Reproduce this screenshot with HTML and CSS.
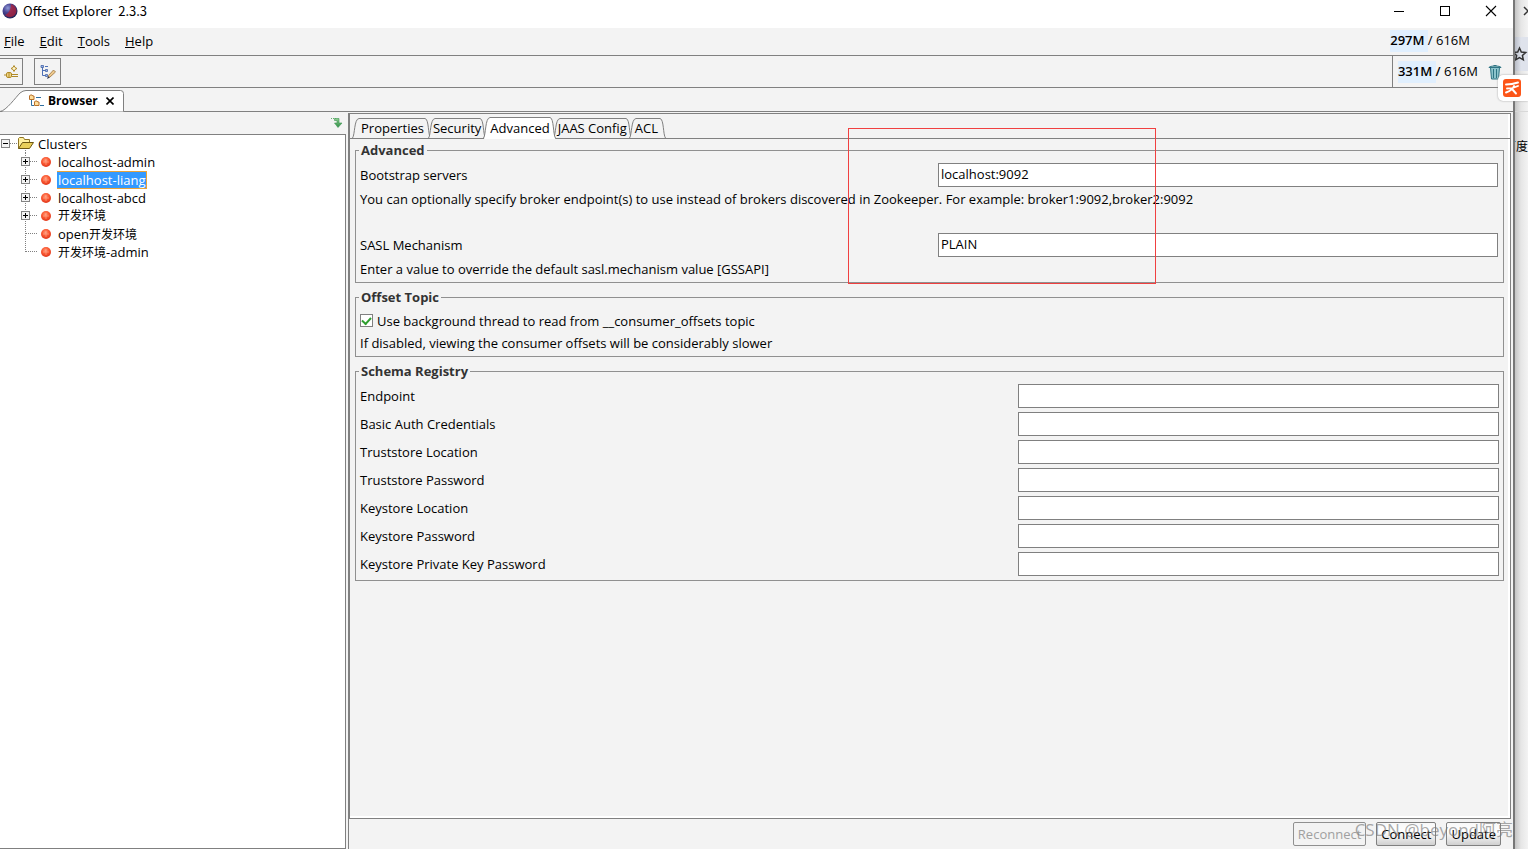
FILE: index.html
```
<!DOCTYPE html>
<html lang="zh-CN">
<head>
<meta charset="utf-8">
<title>Offset Explorer</title>
<link rel="stylesheet" href="styles.css">
</head>
<body>
<svg class="defs" aria-hidden="true">
  <defs>
    <radialGradient id="ball" cx="45%" cy="35%" r="65%"><stop offset="0" stop-color="#ff9a78"/><stop offset=".5" stop-color="#fb5a34"/><stop offset="1" stop-color="#e0371a"/></radialGradient>
    <radialGradient id="logo" cx="35%" cy="30%" r="75%"><stop offset="0" stop-color="#8f9ad8"/><stop offset=".4" stop-color="#4a4694"/><stop offset="1" stop-color="#1c2050"/></radialGradient>
    <linearGradient id="arrow" x1="0" y1="0" x2="0" y2="1"><stop offset="0" stop-color="#8fd08f"/><stop offset="1" stop-color="#2c8a45"/></linearGradient>
    <g id="dot"><circle cx="46" cy="9" r="5" fill="url(#ball)"/><path d="M43 9h6M46 6v6" stroke="#ffb49c" stroke-width="1" opacity=".5"/></g>
    <g id="plus" shape-rendering="crispEdges"><rect x="21.500" y="4.500" width="8" height="8" fill="#f4f4f4" stroke="#848484"/><path d="M23 8.500h5M25.500 6v5" stroke="#000"/></g>
    <g id="branch" fill="none" stroke="#808080" stroke-dasharray="1 1" shape-rendering="crispEdges"><path d="M25.500 0v18M26 8.500h11"/></g>
    <g id="edge-l"><path d="M1 20C3 17 2 1 7 0.500V20z" fill="#f4f4f4"/><path d="M.5 20C3 17 2 1 7 .5" fill="none" stroke="#808080"/></g>
    <g id="edge-r"><path d="M0 .5C4 1 3 17 5.500 20H0z" fill="#f4f4f4"/><path d="M0 .5C4 1 3 17 5.500 20" fill="none" stroke="#808080"/></g>
  </defs>
</svg>
<div class="desktop">
  <main class="window">
    <header class="titlebar">
      <svg class="logo" width="16" height="16" viewBox="0 0 16 16"><circle cx="8" cy="8" r="7.500" fill="url(#logo)"/><path d="M9 1a7 7 0 0 1 5 9c-2 5-8 5-11 2 3-1 6-5 6-11z" fill="#b02038" opacity=".75"/></svg>
      <h1>Offset Explorer&nbsp; 2.3.3</h1>
      <div class="controls">
        <button aria-label="Minimize"><svg width="12" height="12"><path d="M1 6.500h10" stroke="#000"/></svg></button>
        <button aria-label="Maximize"><svg width="12" height="12"><rect x="1.500" y="1.500" width="9" height="9" fill="none" stroke="#000"/></svg></button>
        <button aria-label="Close"><svg width="12" height="12"><path d="M1 1l10 10M11 1L1 11" stroke="#000" stroke-width="1.100"/></svg></button>
      </div>
    </header>
    <div class="menubar">
      <nav><a href="#"><u>F</u>ile</a><a href="#"><u>E</u>dit</a><a href="#"><u>T</u>ools</a><a href="#"><u>H</u>elp</a></nav>
      <div class="memory"><b>297M</b> / 616M</div>
    </div>
    <div class="toolbar">
      <button class="tool first" aria-label="Add connection"><svg width="16" height="16" viewBox="0 0 16 16" fill="#f3d98a" stroke="#b08a28"><path d="M1 11h3M9 10.500h6M9 12.500h6"/><rect x="3.500" y="8.500" width="5" height="5" rx="1.500"/><path d="M6 8v6"/><path d="M11 1.500l1 2 2 1-2 1-1 2-1-2-2-1 2-1z" fill="#fff6d0"/></svg></button>
      <button class="tool" aria-label="Edit tree"><svg width="16" height="16" viewBox="0 0 16 16"><path d="M2.500 3v8.500h3M2.500 6.500h3M5 2.500h3" fill="none" stroke="#4c6fb5"/><path d="M1 1.500h2.500v2H1zM5.500 5.500h2v2h-2zM5.500 10.500h2v2h-2z" fill="#9db6e6" stroke="#4464a8" stroke-width=".8"/><path d="M8 13.500l.5-2L13.500 6l2 2-5.500 5z" fill="#efca8e" stroke="#9a7440" stroke-width=".8"/><path d="M7 15l1.200-2.800 1.600 1.300z" fill="#28334f"/></svg></button>
      <div class="heap"><div class="memory"><b>331M /</b> 616M</div>
        <button class="trash" aria-label="Collect garbage"><svg width="14" height="16" viewBox="0 0 14 16"><path d="M2.500 3.500h9l-1 11.500h-7z" fill="#8cc4cc" stroke="#2f7484"/><path d="M1 3.500C1 1.500 13 1.500 13 3.500z" fill="#b5dadb" stroke="#2f7484"/><path d="M5.500 5v9M8.500 5v9" stroke="#2f7484"/><path d="M5.500 1.500h3" stroke="#2f7484"/></svg></button></div>
    </div>
    <div class="viewtabs">
      <div class="viewtab">
        <svg class="viewshape" width="124" height="24" viewBox="0 0 124 24"><path d="M2 23.500C6 22 16 9 20 5q3-2.500 6-2.500h94.500q3 0 3 3v18z" fill="#fff"/><path d="M0 23.500C6 23 16 9 20 5q3-2.500 6-2.500h94.500q3 0 3 3v18" fill="none" stroke="#808080"/></svg>
        <svg class="viewicon" width="16" height="16" viewBox="0 0 16 16"><path d="M3.500 6v6.500H6M8 4.500h5M12 12.500h4" fill="none" stroke="#2f6f9f"/><path d="M1.500 3l.8-1h1.700l.8 1h1.200v3.500H1.500zM6.500 9l.8-1h1.700l.8 1h1.200v3.500H6.500z" fill="#ffdf9c" stroke="#b8702a" stroke-width="1"/></svg>
        <span>Browser</span>
        <button aria-label="Close Browser"><svg width="8" height="8"><path d="M.5.5l7 7M7.500.5l-7 7" stroke="#000" stroke-width="1.600"/></svg></button>
      </div>
    </div>
    <div class="panes">
      <aside class="side">
        <div class="sidebar-tools"><button aria-label="Link selection"><svg width="12" height="12" viewBox="0 0 12 12"><path d="M0 1.500h5" stroke="#64b070" stroke-dasharray="1 1"/><path d="M3.500 1.500H8V6h3L7 10.500 3.500 6H6V3.500H3.500z" fill="url(#arrow)" stroke="#3c9552" stroke-width=".6"/></svg></button></div>
        <ul class="tree">
          <li><svg width="38" height="18"><path d="M10 8.500h8M25.500 15v3" stroke="#808080" stroke-dasharray="1 1" shape-rendering="crispEdges"/><g shape-rendering="crispEdges"><rect x="1.500" y="4.500" width="8" height="8" fill="#f4f4f4" stroke="#848484"/><path d="M3 8.500h5" stroke="#000"/></g><path d="M18.500 13.500v-10l1-1h4l1 2h5v3" fill="#fff0a0" stroke="#8f7423"/><path d="M18.500 13.500l4-6h11l-4 6z" fill="#e9cf5a" stroke="#6d5712"/></svg><span>Clusters</span></li>
          <li><svg width="58" height="18"><use href="#branch"/><use href="#plus"/><use href="#dot"/></svg><span>localhost-admin</span></li>
          <li><svg width="58" height="18"><use href="#branch"/><use href="#plus"/><use href="#dot"/></svg><span class="selected">localhost-liang</span></li>
          <li><svg width="58" height="18"><use href="#branch"/><use href="#plus"/><use href="#dot"/></svg><span>localhost-abcd</span></li>
          <li><svg width="58" height="18"><use href="#branch"/><use href="#plus"/><use href="#dot"/></svg><span class="han">开发环境</span></li>
          <li><svg width="58" height="18"><use href="#branch"/><use href="#dot"/></svg><span>open<span class="han">开发环境</span></span></li>
          <li><svg width="58" height="18"><path d="M25.500 0v9M26 8.500h11" stroke="#808080" stroke-dasharray="1 1" shape-rendering="crispEdges"/><use href="#dot"/></svg><span><span class="han">开发环境</span>-admin</span></li>
        </ul>
      </aside>
      <section class="detail">
        <div class="body">
          <div class="tabs" role="tablist">
            <button role="tab" class="tab"><svg class="l" width="7" height="20"><use href="#edge-l"/></svg><svg class="r" width="6" height="20"><use href="#edge-r"/></svg><span>Properties</span></button>
            <button role="tab" class="tab"><svg class="l" width="7" height="20"><use href="#edge-l"/></svg><svg class="r" width="6" height="20"><use href="#edge-r"/></svg><span>Security</span></button>
            <button role="tab" class="tab active" aria-selected="true"><svg class="l" width="7" height="22" viewBox="0 0 7 22"><path d="M1 22C3 18 2 1 7 .5V22z" fill="#fff"/><path d="M.5 21C3 18 2 1 7 .5" fill="none" stroke="#808080"/></svg><svg class="r" width="6" height="22" viewBox="0 0 6 22"><path d="M0 .5C4 1 3 18 5.500 22H0z" fill="#fff"/><path d="M0 .5C4 1 3 18 5.500 21" fill="none" stroke="#808080"/></svg><span>Advanced</span></button>
            <button role="tab" class="tab"><svg class="l" width="7" height="20"><use href="#edge-l"/></svg><svg class="r" width="6" height="20"><use href="#edge-r"/></svg><span>JAAS Config</span></button>
            <button role="tab" class="tab"><svg class="l" width="7" height="20"><use href="#edge-l"/></svg><svg class="r" width="6" height="20"><use href="#edge-r"/></svg><span>ACL</span></button>
          </div>
          <form class="groups">
            <fieldset class="advanced">
              <legend>Advanced</legend>
              <label for="boot">Bootstrap servers</label><input id="boot" value="localhost:9092">
              <p>You can optionally specify broker endpoint(s) to use instead of brokers discovered in Zookeeper. For example: broker1:9092,broker2:9092</p>
              <label class="spaced" for="sasl">SASL Mechanism</label><input class="spaced" id="sasl" value="PLAIN">
              <p>Enter a value to override the default sasl.mechanism value [GSSAPI]</p>
            </fieldset>
            <fieldset class="topic">
              <legend>Offset Topic</legend>
              <div class="check"><input type="checkbox" id="bg" checked><label for="bg">Use background thread to read from __consumer_offsets topic</label></div>
              <p>If disabled, viewing the consumer offsets will be considerably slower</p>
            </fieldset>
            <fieldset class="registry">
              <legend>Schema Registry</legend>
              <label for="r1">Endpoint</label><input id="r1">
              <label for="r2">Basic Auth Credentials</label><input id="r2">
              <label for="r3">Truststore Location</label><input id="r3">
              <label for="r4">Truststore Password</label><input id="r4">
              <label for="r5">Keystore Location</label><input id="r5">
              <label for="r6">Keystore Password</label><input id="r6">
              <label for="r7">Keystore Private Key Password</label><input id="r7">
            </fieldset>
          </form>
        </div>
        <footer class="actions"><button disabled>Reconnect</button><button>Connect</button><button>Update</button></footer>
      </section>
    </div>
  </main>
  <aside class="behind">
    <svg class="bx" width="13" height="28"><path d="M9 7l8 8M17 7l-8 8" stroke="#333" stroke-width="1.500"/></svg>
    <div class="bstar"><svg width="13" height="16"><path d="M4.500 2l1.800 4 4.400.5-3.300 3 .9 4.300-3.800-2.200-3.800 2.200.9-4.300-3.300-3 4.400-.5z" fill="none" stroke="#333" stroke-width="1.500"/></svg></div>
    <div class="bpage"><span>百度</span></div>
  </aside>
  <div class="marker"></div>
  <div class="badge"><svg width="18" height="18" viewBox="0 0 18 18"><rect width="18" height="18" rx="3" fill="#fc5518"/><path d="M3 5.500c4 0 9-1 12-2M3 13.500c4-1.500 7-3.500 8-6.500M4 9.500c4 0 8-1 11-2.500M9.500 10.500l3.500 4" fill="none" stroke="#fff" stroke-width="1.900" stroke-linecap="round" stroke-linejoin="round"/></svg></div>
  <div class="watermark">CSDN @beyond阿亮</div>
</div>
</body>
</html>
```
FILE: styles.css
```
* { box-sizing: border-box; }
body {
  margin: 0;
  font: 13px/18px "Open Sans", "Noto Sans CJK SC", sans-serif;
  color: #000;
}
button, input { font: inherit; color: inherit; margin: 0; }
button { padding: 0; border: 0; background: none; }
svg { display: block; flex: none; }
p { margin: 0; }
.defs { position: absolute; width: 0; height: 0; }

.desktop {
  position: relative;
  display: grid;
  grid-template-columns: minmax(0, 1fr) 13px;
  height: 100vh;
  overflow: hidden;
}
.window {
  display: flex;
  flex-direction: column;
  background: #f3f3f3;
  border-right: 2px solid #777;
}

.titlebar {
  display: flex;
  align-items: center;
  height: 28px;
  padding: 0 16px 6px 2px;
  background: #fff;
}
.titlebar h1 {
  margin: 0 0 0 5px;
  font: 13px/20px "Noto Sans CJK SC", sans-serif;
}
.controls { display: flex; gap: 34px; margin-left: auto; }
.controls button { width: 12px; height: 12px; }

.menubar {
  display: flex;
  justify-content: space-between;
  align-items: center;
  height: 28px;
  padding: 0 43px 1px 0;
  border-bottom: 1px solid #808080;
}
.menubar nav { display: flex; gap: 15px; padding-left: 4px; }
.menubar a { color: inherit; text-decoration: none; }
.memory {
  height: 22px;
  line-height: 20px;
  background: linear-gradient(90deg, #e0effe 38px, transparent 38px);
}
.memory b { font-weight: 600; }

.toolbar {
  display: flex;
  align-items: center;
  gap: 11px;
  height: 32px;
  border-bottom: 1px solid #808080;
}
.tool {
  display: grid;
  place-items: center;
  width: 27px;
  height: 27px;
  border: 1px solid #808080;
}
.tool.first { width: 23px; border-left: 0; }
.heap {
  display: flex;
  align-items: center;
  gap: 10px;
  height: 31px;
  margin-left: auto;
  padding: 0 11px 0 5px;
  border-left: 1px solid #808080;
}

.viewtabs { height: 24px; border-bottom: 1px solid #808080; }
.viewtab {
  position: relative;
  display: flex;
  align-items: center;
  width: 124px;
  height: 24px;
  padding: 1px 0 0 28px;
  font-size: 12px;
  font-weight: 700;
}
.viewtab > * { position: relative; }
.viewtab .viewshape { position: absolute; left: 0; top: 0; }
.viewtab span { margin: 0 8px 0 4px; }

.panes {
  flex: 1;
  display: grid;
  grid-template-columns: 346px minmax(0, 1fr);
  gap: 2px;
  min-height: 0;
  padding-top: 1px;
}
.side {
  display: flex;
  flex-direction: column;
}
.sidebar-tools {
  display: flex;
  justify-content: flex-end;
  align-items: center;
  height: 21px;
  padding: 0 3px 1px;
}
.tree {
  flex: 1;
  margin: 0;
  padding: 0;
  list-style: none;
  background: #fff;
  border: 1px solid #808080;
  border-left: 0;
}
.tree li { display: flex; height: 18px; }
.tree .han { font-size: 12px; }
.tree .selected {
  margin: 0 0 0 -1px;
  padding: 0 1px;
  line-height: 16px;
  color: #fff;
  background: #3399ff;
  border: 1px solid #e8a33a;
  border-left-width: 0;
}

.detail {
  display: flex;
  flex-direction: column;
  border-left: 1px solid #808080;
  min-width: 0;
}
.body {
  flex: 1;
  margin-right: 2px;
  border: 1px solid #808080;
  box-shadow: inset -2px -2px #fff;
}
.tabs {
  display: flex;
  align-items: flex-end;
  height: 25px;
  padding-left: 2px;
  border-bottom: 1px solid #808080;
}
.tab {
  position: relative;
  height: 20px;
  margin-right: -3px;
  padding: 0 5px;
  line-height: 20px;
}
.tab:first-child { padding: 0 7px 0 9px; }
.tab:last-child { padding: 0 8px 0 6px; }
.tab::before {
  content: "";
  position: absolute;
  inset: 0 6px 0 7px;
  border-top: 1px solid #808080;
}
.tab svg { position: absolute; top: 0; }
.tab .l { left: 0; }
.tab .r { right: 0; }
.tab span { position: relative; }
.tab.active {
  z-index: 1;
  height: 22px;
  margin-bottom: -1px;
  padding: 0 6px 0 7px;
}
.tab.active::before { background: #fff; }

.groups {
  display: flex;
  flex-direction: column;
  gap: 6px;
  padding: 3px 6px 0 5px;
}
fieldset {
  min-width: 0;
  margin: 0;
  border: 1px solid #909090;
}
legend {
  margin-left: -1px;
  padding: 0 2px;
  line-height: 16px;
  font-weight: 700;
  color: #333;
}
.advanced, .registry { display: grid; align-items: center; }
.advanced {
  grid-template-columns: minmax(0, 578fr) 560fr;
  padding: 5px 5px 1px 4px;
}
.advanced p { grid-column: 1 / -1; line-height: 24px; white-space: nowrap; }
.spaced { margin-top: 22px; }
fieldset input:not([type="checkbox"]) {
  width: 100%;
  height: 24px;
  padding: 0 2px 2px;
  background: #fff;
  border: 1px solid #808080;
  border-radius: 0;
}
.topic { padding: 4px 4px 1px; }
.topic p { line-height: 23px; }
.check { display: flex; align-items: center; gap: 4px; height: 23px; }
.check input {
  appearance: none;
  width: 13px;
  height: 13px;
  background: #fff;
  border: 1px solid #808080;
  display: grid;
  place-items: center;
}
.check input:checked::before {
  content: "";
  width: 7px;
  height: 4px;
  margin-bottom: 2px;
  border: solid #2f9e2f;
  border-width: 0 0 2px 2px;
  transform: rotate(-48deg);
}
.registry {
  grid-template-columns: minmax(0, 658fr) 481fr;
  row-gap: 4px;
  padding: 5px 4px 4px;
}

.actions {
  display: flex;
  justify-content: flex-end;
  gap: 10px;
  height: 30px;
  padding: 3px 12px 3px 0;
}
.actions button {
  height: 24px;
  padding: 0 4px;
  background: linear-gradient(#f8f8f8, #fff 40%, #d0d0d0);
  border: 1px solid #808080;
  border-radius: 2px;
}
.actions button:disabled { color: #a0a0a0; background: #f3f3f3; border-color: #909090; }

.behind {
  display: flex;
  flex-direction: column;
  overflow: hidden;
  background: linear-gradient(90deg, #c4c4c4, #e6e6e6 6px, #f3f3f3);
}
.bx { margin-bottom: 9px; }
.bstar { height: 34px; padding-top: 9px; background: linear-gradient(90deg, #b8bcc6, #dfe3ec 6px); }
.bpage {
  flex: 1;
  display: flex;
  justify-content: flex-end;
  align-items: flex-start;
  margin-top: 40px;
  padding-top: 26px;
  border-top: 1px solid #d8d8d8;
  font-size: 12px;
  white-space: nowrap;
}

.marker {
  position: absolute;
  left: 848px;
  top: 128px;
  width: 308px;
  height: 156px;
  border: 1px solid #f04040;
}
.badge {
  position: absolute;
  right: 0;
  top: 75px;
  width: 30px;
  height: 26px;
  padding: 4px 5px;
  background: #fff;
  border-radius: 5px 0 0 5px;
  box-shadow: 0 0 2px #999;
}
.watermark {
  position: absolute;
  right: 15px;
  bottom: 8px;
  font: 17px/22px "Open Sans", "Noto Sans CJK SC", sans-serif;
  color: rgba(120, 120, 120, .65);
}
```
